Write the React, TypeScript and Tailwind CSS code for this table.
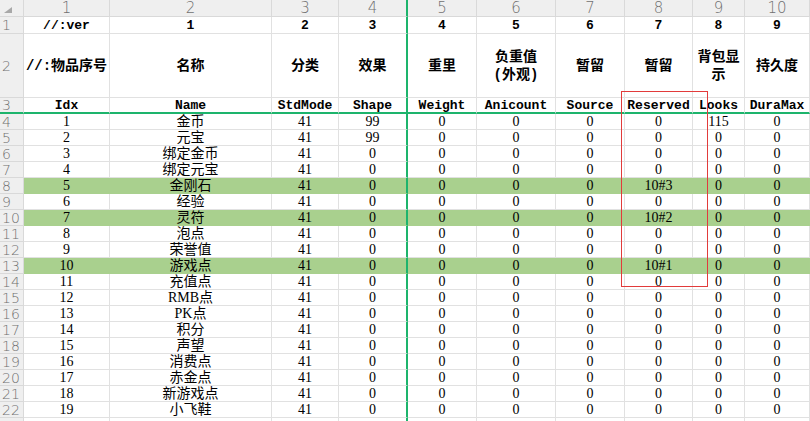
import React from 'react';

const items = [
  ['1', '金币', '41', '99', '0', '0', '0', '0', '115', '0'],
  ['2', '元宝', '41', '99', '0', '0', '0', '0', '0', '0'],
  ['3', '绑定金币', '41', '0', '0', '0', '0', '0', '0', '0'],
  ['4', '绑定元宝', '41', '0', '0', '0', '0', '0', '0', '0'],
  ['5', '金刚石', '41', '0', '0', '0', '0', '10#3', '0', '0'],
  ['6', '经验', '41', '0', '0', '0', '0', '0', '0', '0'],
  ['7', '灵符', '41', '0', '0', '0', '0', '10#2', '0', '0'],
  ['8', '泡点', '41', '0', '0', '0', '0', '0', '0', '0'],
  ['9', '荣誉值', '41', '0', '0', '0', '0', '0', '0', '0'],
  ['10', '游戏点', '41', '0', '0', '0', '0', '10#1', '0', '0'],
  ['11', '充值点', '41', '0', '0', '0', '0', '0', '0', '0'],
  ['12', 'RMB点', '41', '0', '0', '0', '0', '0', '0', '0'],
  ['13', 'PK点', '41', '0', '0', '0', '0', '0', '0', '0'],
  ['14', '积分', '41', '0', '0', '0', '0', '0', '0', '0'],
  ['15', '声望', '41', '0', '0', '0', '0', '0', '0', '0'],
  ['16', '消费点', '41', '0', '0', '0', '0', '0', '0', '0'],
  ['17', '赤金点', '41', '0', '0', '0', '0', '0', '0', '0'],
  ['18', '新游戏点', '41', '0', '0', '0', '0', '0', '0', '0'],
  ['19', '小飞鞋', '41', '0', '0', '0', '0', '0', '0', '0'],
  ['', '', '', '', '', '', '', '', '', ''],
];

const greenRows = ['5', '7', '10'];

const verRow = ['//:ver', '1', '2', '3', '4', '5', '6', '7', '8', '9'];
const nameRow = ['//:物品序号', '名称', '分类', '效果', '重里', '负重值\n(外观)', '暂留', '暂留', '背包显\n示', '持久度'];
const keyRow = ['Idx', 'Name', 'StdMode', 'Shape', 'Weight', 'Anicount', 'Source', 'Reserved', 'Looks', 'DuraMax'];

// col 3 ("Shape") carries the frozen-pane line on its right edge, row 3 on its bottom edge
function cellBorder(col: number, green: boolean, frozenRow: boolean) {
  const right = col === 3 ? 'border-r-2 border-r-[#1db46c]' : green ? 'border-r border-r-[#a9d08e]' : 'border-r border-r-[#e1e1e1]';
  const bottom = frozenRow ? 'border-b-2 border-b-[#1db46c]' : green ? 'border-b border-b-[#a9d08e]' : 'border-b border-b-[#e1e1e1]';
  const bg = green ? 'bg-[#a9d08e]' : 'bg-white';
  return `${right} ${bottom} ${bg}`;
}

function ColHead({ n }: { n: number }) {
  const right = n === 4 ? 'border-r-2 border-r-[#1db46c]' : 'border-r border-r-[#d9d9d9]';
  return (
    <div
      className={`flex items-center justify-center bg-[#efefef] border-b border-b-[#d9d9d9] ${right} text-[15px] font-extralight text-[#6f6f6f] leading-none font-['DejaVu_Sans',sans-serif]`}
    >
      {n}
    </div>
  );
}

function RowHead({ n, frozen }: { n?: number; frozen?: boolean }) {
  const bottom = frozen ? 'border-b-2 border-b-[#1db46c]' : 'border-b border-b-[#d9d9d9]';
  return (
    <div
      className={`flex items-center pl-[2px] bg-[#efefef] border-r border-r-[#d9d9d9] ${bottom} text-[14px] font-extralight text-[#6f6f6f] leading-[14px] font-['DejaVu_Sans',sans-serif]`}
    >
      {n}
    </div>
  );
}

export default function App() {
  return (
    <div className="relative w-[810px] h-[421px] overflow-hidden bg-white">
      <div className="grid grid-cols-[24px_86px_162px_67px_69px_69px_79px_69px_68px_52px_65px] grid-rows-[17px_17px_64px_16px_repeat(20,16px)]">
        {/* corner */}
        <div className="relative bg-[#efefef] border-r border-b border-[#d9d9d9]">
          <svg className="absolute left-[4px] top-[7px]" width="8" height="6" viewBox="0 0 8 6">
            <polygon points="8,0 8,6 0,6" fill="#a8a8a8" />
          </svg>
        </div>
        {[1, 2, 3, 4, 5, 6, 7, 8, 9, 10].map((n) => (
          <ColHead key={n} n={n} />
        ))}

        {/* row 1 */}
        <RowHead n={1} />
        {verRow.map((t, i) => (
          <div
            key={'v' + i}
            className={`flex items-center justify-center text-[13px] font-bold text-black leading-none font-['Liberation_Mono','Noto_Sans_CJK_SC',monospace] ${cellBorder(i, false, false)}`}
          >
            {t}
          </div>
        ))}

        {/* row 2 */}
        <RowHead n={2} />
        {nameRow.map((t, i) => (
          <div
            key={'n' + i}
            className={`flex items-center justify-center text-center whitespace-pre-line text-[14px] font-bold text-black leading-[18px] font-['Liberation_Mono','Noto_Sans_CJK_SC',monospace] ${cellBorder(i, false, false)}`}
          >
            {t}
          </div>
        ))}

        {/* row 3 */}
        <RowHead n={3} frozen />
        {keyRow.map((t, i) => (
          <div
            key={'k' + i}
            className={`flex items-end justify-center whitespace-nowrap text-[13px] font-bold text-black leading-none font-['Liberation_Mono','Noto_Sans_CJK_SC',monospace] ${cellBorder(i, false, true)}`}
          >
            {t}
          </div>
        ))}

        {/* data rows */}
        {items.map((row, r) => {
          const green = greenRows.includes(row[0]);
          return (
            <React.Fragment key={'r' + r}>
              <RowHead n={row[0] ? r + 4 : undefined} />
              {row.map((t, i) => (
                <div
                  key={i}
                  className={`flex items-center justify-center whitespace-nowrap text-[14px] text-black leading-none font-['Liberation_Serif','Noto_Sans_CJK_SC',serif] ${cellBorder(i, green, false)}`}
                >
                  {t}
                </div>
              ))}
            </React.Fragment>
          );
        })}
      </div>

      {/* highlight box drawn over the Reserved column */}
      <div className="absolute left-[621px] top-[91px] w-[87px] h-[196px] border border-[#e23b3b] pointer-events-none" />
    </div>
  );
}
